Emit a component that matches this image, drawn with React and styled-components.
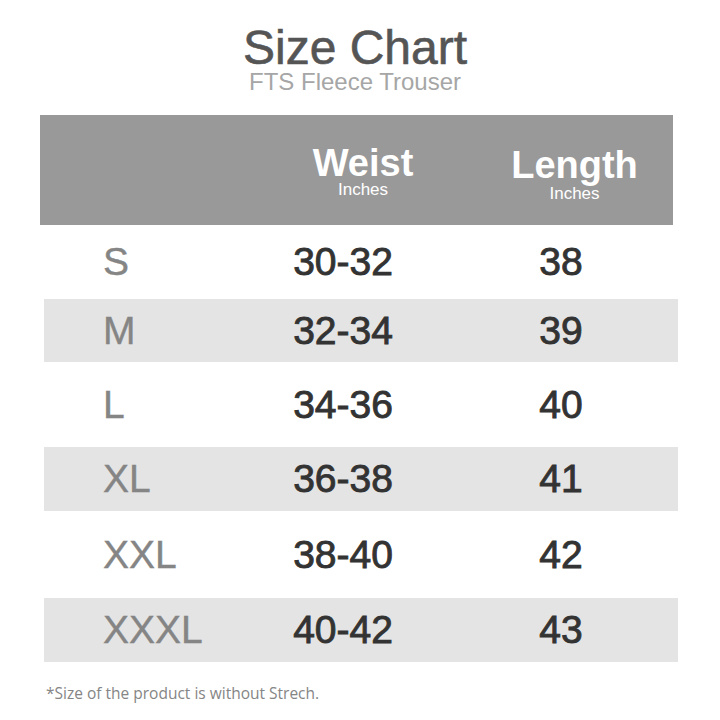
import React from 'react';
import styled, { createGlobalStyle } from 'styled-components';

const GlobalStyle = createGlobalStyle`
    html, body {
        margin: 0;
        padding: 0;
        background: #ffffff;
    }
`;

const Page = styled.div`
    width: 720px;
    height: 720px;
    display: flex;
    flex-direction: column;
    font-family: "Liberation Sans", Arial, sans-serif;
    overflow: hidden;
`;

const TitleBlock = styled.div`
    display: flex;
    flex-direction: column;
    align-items: center;
    padding: 26px 10px 0 0;
    height: 115px;
    box-sizing: border-box;
`;

const Title = styled.h1`
    margin: 0;
    font-size: 48px;
    line-height: 44px;
    font-weight: 400;
    color: #555555;
    -webkit-text-stroke: 0.6px #555555;
`;

const Subtitle = styled.div`
    margin-top: 1px;
    font-size: 24px;
    line-height: 21px;
    color: #a6a6a6;
`;

const HeaderBar = styled.div`
    margin-left: 40px;
    width: 633px;
    height: 110px;
    background: #999999;
    display: grid;
    grid-template-columns: 210px 226px 1fr;
    align-items: start;
`;

const HeadCell = styled.div`
    display: flex;
    flex-direction: column;
    align-items: center;
    color: #ffffff;
    padding-top: ${p => p.$offset || 0}px;
`;

const HeadLabel = styled.div`
    font-size: 38px;
    line-height: 34px;
    font-weight: 700;
`;

const HeadUnit = styled.div`
    margin-top: ${p => p.$gap || 0}px;
    font-size: 17px;
    line-height: 15px;
`;

const Table = styled.div`
    margin-left: 44px;
    width: 634px;
    display: flex;
    flex-direction: column;
`;

const Row = styled.div`
    height: ${p => p.$h}px;
    background: ${p => (p.$shaded ? '#e4e4e4' : '#ffffff')};
    display: grid;
    grid-template-columns: 206px 186px 1fr;
    align-items: center;
`;

const SizeCell = styled.div`
    padding-left: 59px;
    font-size: 39px;
    color: #858585;
    -webkit-text-stroke: 0.4px #858585;
`;

const ValueCell = styled.div`
    text-align: center;
    font-size: 39px;
    color: #333333;
    -webkit-text-stroke: 0.9px #333333;
    padding-left: ${p => p.$pl || 0}px;
`;

const Note = styled.div`
    margin: 20px 0 0 46px;
    font-family: "Open Sans", "Liberation Sans", sans-serif;
    font-size: 15.5px;
    color: #858585;
`;

const rows = [
    { size: 'S', waist: '30-32', length: '38', h: 74 },
    { size: 'M', waist: '32-34', length: '39', h: 63, shaded: true },
    { size: 'L', waist: '34-36', length: '40', h: 85 },
    { size: 'XL', waist: '36-38', length: '41', h: 64, shaded: true },
    { size: 'XXL', waist: '38-40', length: '42', h: 87 },
    { size: 'XXXL', waist: '40-42', length: '43', h: 64, shaded: true },
];

export default function App() {
    return (
        <Page>
            <GlobalStyle />
            <TitleBlock>
                <Title>Size Chart</Title>
                <Subtitle>FTS Fleece Trouser</Subtitle>
            </TitleBlock>
            <HeaderBar>
                <div />
                <HeadCell $offset={31}>
                    <HeadLabel>Weist</HeadLabel>
                    <HeadUnit $gap={2}>Inches</HeadUnit>
                </HeadCell>
                <HeadCell $offset={33}>
                    <HeadLabel>Length</HeadLabel>
                    <HeadUnit $gap={4}>Inches</HeadUnit>
                </HeadCell>
            </HeaderBar>
            <Table>
                {rows.map(r => (
                    <Row key={r.size} $h={r.h} $shaded={r.shaded}>
                        <SizeCell>{r.size}</SizeCell>
                        <ValueCell>{r.waist}</ValueCell>
                        <ValueCell $pl={8}>{r.length}</ValueCell>
                    </Row>
                ))}
            </Table>
            <Note>*Size of the product is without Strech.</Note>
        </Page>
    );
}
